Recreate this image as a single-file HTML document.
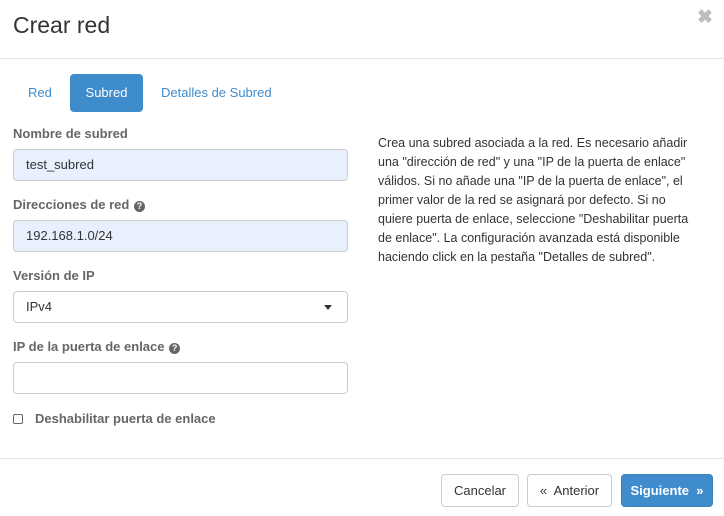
<!DOCTYPE html>
<html><head><style>
*{box-sizing:border-box;margin:0;padding:0}
body{width:724px;height:516px;background:#fff;font-family:"Liberation Sans",sans-serif;font-size:13px;color:#333;position:relative;overflow:hidden}
.a{position:absolute}
.title{left:13px;top:12px;font-size:23px;color:#333}
.x{left:697px;top:6px;font-size:19px;color:#bdbdbd;font-weight:bold}
.hr{left:0;width:724px;height:1px;background:#e5e5e5}
.tab{top:74px;height:38px;line-height:38px;color:#3f8ccc;font-size:13px}
.lbl{left:13px;font-weight:bold;color:#666;font-size:13px}
.inp{left:13px;width:335px;height:32px;border:1px solid #ccc;border-radius:4px;padding-left:12px;line-height:30px;font-size:13px;color:#333}
.q{display:inline-block;width:11px;height:11px;border-radius:50%;background:#666;color:#fff;font-size:9px;line-height:11px;text-align:center;vertical-align:0px;margin-left:1px}
.btn{top:474px;height:33px;border:1px solid #ccc;border-radius:4px;line-height:31px;text-align:center;font-size:13px;color:#333}
.help{left:378px;top:134px;width:324px;line-height:19px;font-size:12.5px;color:#333}
</style></head><body>
<div class="a title">Crear red</div>
<div class="a x">✖</div>
<div class="a hr" style="top:58px"></div>
<div class="a tab" style="left:28px">Red</div>
<div class="a tab" style="left:70px;width:73px;background:#3f8ccc;color:#fff;border-radius:4px;text-align:center">Subred</div>
<div class="a tab" style="left:161px">Detalles de Subred</div>
<div class="a lbl" style="top:126px">Nombre de subred</div>
<div class="a inp" style="top:149px;background:#e8f0fe">test_subred</div>
<div class="a lbl" style="top:197px">Direcciones de red <span class="q">?</span></div>
<div class="a inp" style="top:220px;background:#e8f0fe">192.168.1.0/24</div>
<div class="a lbl" style="top:268px">Versión de IP</div>
<div class="a inp" style="top:291px">IPv4<span class="a" style="right:15px;top:13px;width:0;height:0;border-left:4px solid transparent;border-right:4px solid transparent;border-top:5px solid #333"></span></div>
<div class="a lbl" style="top:339px">IP de la puerta de enlace <span class="q">?</span></div>
<div class="a inp" style="top:362px"></div>
<div class="a" style="left:13px;top:414px;width:10px;height:10px;border:1px solid #666;border-radius:2px"></div>
<div class="a lbl" style="left:35px;top:411px">Deshabilitar puerta de enlace</div>
<div class="a help">Crea una subred asociada a la red. Es necesario añadir una "dirección de red" y una "IP de la puerta de enlace" válidos. Si no añade una "IP de la puerta de enlace", el primer valor de la red se asignará por defecto. Si no quiere puerta de enlace, seleccione "Deshabilitar puerta de enlace". La configuración avanzada está disponible haciendo click en la pestaña "Detalles de subred".</div>
<div class="a hr" style="top:458px"></div>
<div class="a btn" style="left:441px;width:78px">Cancelar</div>
<div class="a btn" style="left:527px;width:85px">«&nbsp; Anterior</div>
<div class="a btn" style="left:621px;width:92px;background:#3f8ccc;border-color:#3a82c0;color:#fff;font-weight:bold">Siguiente &nbsp;»</div>
</body></html>
